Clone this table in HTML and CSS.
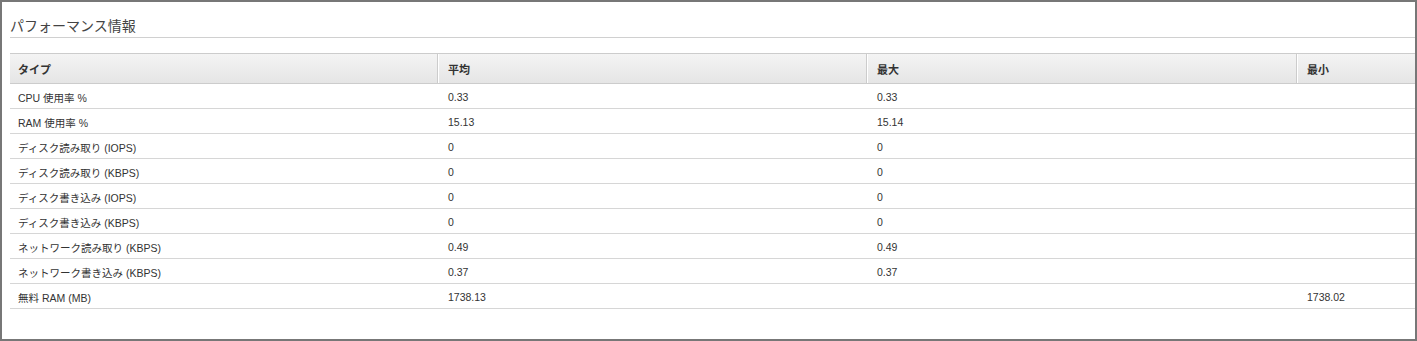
FILE: index.html
```html
<!DOCTYPE html>
<html lang="ja">
<head>
<meta charset="utf-8">
<title>パフォーマンス情報</title>
<link rel="stylesheet" href="styles.css">
</head>
<body>
<div class="frame">
  <h2 class="title">パフォーマンス情報</h2>
  <div class="grid">
    <div class="row head">
      <div class="cell c1">タイプ</div>
      <div class="cell c2">平均</div>
      <div class="cell c3">最大</div>
      <div class="cell c4">最小</div>
    </div>
    <div class="row">
      <div class="cell c1">CPU 使用率 %</div>
      <div class="cell c2">0.33</div>
      <div class="cell c3">0.33</div>
      <div class="cell c4"></div>
    </div>
    <div class="row">
      <div class="cell c1">RAM 使用率 %</div>
      <div class="cell c2">15.13</div>
      <div class="cell c3">15.14</div>
      <div class="cell c4"></div>
    </div>
    <div class="row">
      <div class="cell c1">ディスク読み取り (IOPS)</div>
      <div class="cell c2">0</div>
      <div class="cell c3">0</div>
      <div class="cell c4"></div>
    </div>
    <div class="row">
      <div class="cell c1">ディスク読み取り (KBPS)</div>
      <div class="cell c2">0</div>
      <div class="cell c3">0</div>
      <div class="cell c4"></div>
    </div>
    <div class="row">
      <div class="cell c1">ディスク書き込み (IOPS)</div>
      <div class="cell c2">0</div>
      <div class="cell c3">0</div>
      <div class="cell c4"></div>
    </div>
    <div class="row">
      <div class="cell c1">ディスク書き込み (KBPS)</div>
      <div class="cell c2">0</div>
      <div class="cell c3">0</div>
      <div class="cell c4"></div>
    </div>
    <div class="row">
      <div class="cell c1">ネットワーク読み取り (KBPS)</div>
      <div class="cell c2">0.49</div>
      <div class="cell c3">0.49</div>
      <div class="cell c4"></div>
    </div>
    <div class="row">
      <div class="cell c1">ネットワーク書き込み (KBPS)</div>
      <div class="cell c2">0.37</div>
      <div class="cell c3">0.37</div>
      <div class="cell c4"></div>
    </div>
    <div class="row">
      <div class="cell c1">無料 RAM (MB)</div>
      <div class="cell c2">1738.13</div>
      <div class="cell c3"></div>
      <div class="cell c4">1738.02</div>
    </div>
  </div>
</div>
</body>
</html>
```
FILE: styles.css
```css
html, body {
  margin: 0;
  padding: 0;
  background: #ffffff;
}

body {
  font-family: "Liberation Sans", "Noto Sans CJK JP", sans-serif;
  color: #333333;
}

.frame {
  width: 1417px;
  height: 341px;
  box-sizing: border-box;
  border: 2px solid #777777;
  padding-left: 8px;
  overflow: hidden;
  background: #ffffff;
}

.title {
  margin: 0;
  padding-top: 13px;
  height: 22px;
  line-height: 22px;
  font-size: 14px;
  font-weight: normal;
  color: #444444;
  border-bottom: 1px solid #d0d0d0;
  white-space: nowrap;
}

.grid {
  margin-top: 15px;
  width: 1717px;
}

.row {
  display: grid;
  grid-template-columns: 428px 429px 430px 430px;
  height: 25px;
  box-sizing: border-box;
  border-bottom: 1px solid #d6d6d6;
  font-size: 10.5px;
}

.cell {
  display: flex;
  align-items: center;
  box-sizing: border-box;
  padding-left: 10px;
  padding-top: 2px;
  white-space: nowrap;
}

.cell.c1 {
  padding-left: 8px;
}

.row.head {
  height: 31px;
  border-top: 1px solid #cccccc;
  border-bottom: 1px solid #cccccc;
  background: linear-gradient(#f4f4f4, #e5e5e5);
  font-weight: bold;
  font-size: 11px;
}

.row.head .cell {
  padding-top: 0;
  padding-left: 9px;
  border-left: 1px solid #ffffff;
  border-right: 1px solid #cccccc;
}

.row.head .cell.c1 {
  padding-left: 8px;
  border-left: 0;
}
```
